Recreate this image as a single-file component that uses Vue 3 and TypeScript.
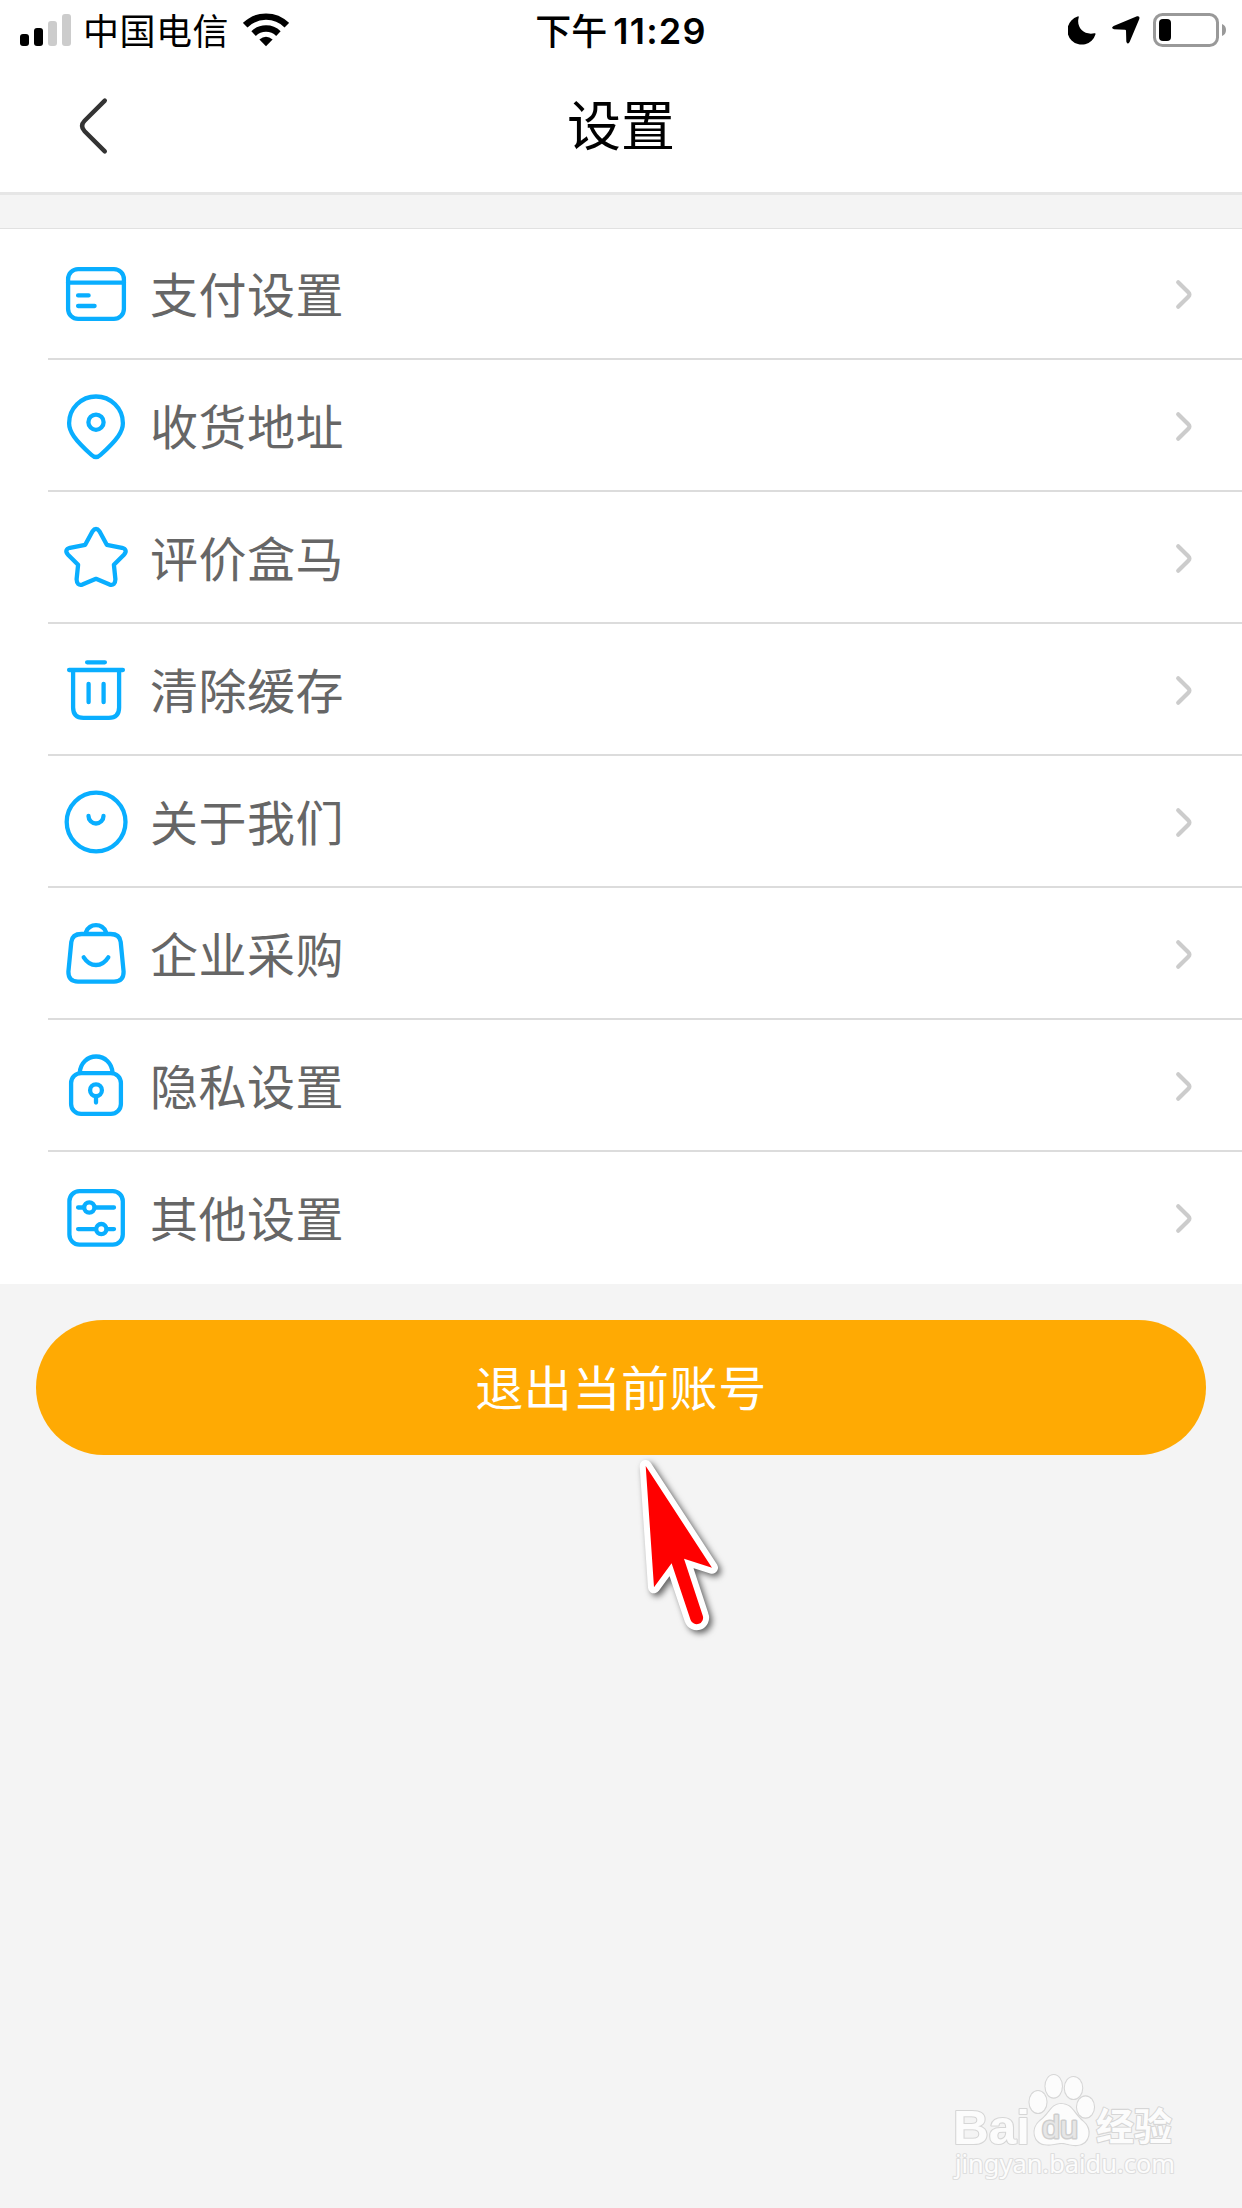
<script setup lang="ts">
interface SettingItem {
  label: string
  icon: string
}

const items: SettingItem[] = [
  { label: '支付设置', icon: 'card' },
  { label: '收货地址', icon: 'pin' },
  { label: '评价盒马', icon: 'star' },
  { label: '清除缓存', icon: 'trash' },
  { label: '关于我们', icon: 'about' },
  { label: '企业采购', icon: 'bag' },
  { label: '隐私设置', icon: 'lock' },
  { label: '其他设置', icon: 'sliders' },
]
</script>

<template>
  <div class="screen">
    <header class="top">
      <div class="status">
        <div class="status-left">
          <svg class="signal" width="52" height="34" viewBox="0 0 52 34">
            <rect x="0" y="21" width="9" height="12" rx="3" />
            <rect x="14" y="15" width="9" height="18" rx="3" />
            <rect x="28" y="8" width="9" height="25" rx="3" fill="#ccc" />
            <rect x="42" y="1" width="9" height="32" rx="3" fill="#ccc" />
          </svg>
          <span class="carrier">中国电信</span>
          <svg class="wifi" width="46" height="34" viewBox="0 0 46 34">
            <g fill="none" stroke="#000" stroke-width="6.4">
              <path d="M2.2 12.2A29.5 29.5 0 0 1 43.8 12.2" />
              <path d="M10.6 20.6A17.8 17.8 0 0 1 35.4 20.6" />
            </g>
            <path d="M23 33.2L16.4 26.6Q23 20.8 29.6 26.6Z" />
          </svg>
        </div>
        <div class="time"><span class="ampm">下午</span><span class="clock">11:29</span></div>
        <div class="status-right">
          <svg width="28" height="30" viewBox="0 0 28 30">
            <path d="M9.6 1.6Q11 .7 10.7 2.4C8 12 15.5 20.6 26.4 18.3Q28 18 27.4 19.4A14.3 14.3 0 1 1 9.6 1.6Z" />
          </svg>
          <svg class="location" width="28" height="30" viewBox="0 0 28 30">
            <path d="M25 1.3Q28.2.6 27.3 4L17.6 27Q15.4 30.2 14.3 26.6L14 15.4Q13.8 14.7 13 14.7L2 14.2Q-1.6 13 1.6 10.9Z" />
          </svg>
          <svg class="battery" width="74" height="36" viewBox="0 0 74 36">
            <rect x="1.5" y="2.5" width="63" height="31" rx="8" fill="none" stroke="#999" stroke-width="3" />
            <rect x="6" y="7" width="12" height="22" rx="4" />
            <path d="M69 12Q73 13.5 73 18T69 24Z" fill="#999" />
          </svg>
        </div>
      </div>
      <div class="nav">
        <svg class="back" width="40" height="68" viewBox="0 0 40 68">
          <path d="M32.8 8.6L12.6 28.8Q7.6 34 12.6 39.2L32.8 59.4" />
        </svg>
        <h1>设置</h1>
      </div>
    </header>

    <ul class="list">
      <li v-for="item in items" :key="item.icon">
        <svg class="icon" width="72" height="72" viewBox="0 0 72 72">
          <template v-if="item.icon === 'card'">
            <rect x="8.1" y="11.1" width="55.8" height="49.8" rx="10" />
            <path d="M8 24.7H64M18.1 37.4H28.6M18.1 48H34.6" />
          </template>
          <template v-else-if="item.icon === 'pin'">
            <path d="M9.1 33.2A26.9 26.7 0 0 1 62.9 33.2C62.9 41.5 57.5 49.5 40.4 65Q36 69.2 31.6 65C14.5 49.5 9.1 41.5 9.1 33.2Z" />
            <circle cx="36" cy="32.2" r="7.6" />
          </template>
          <path
            v-else-if="item.icon === 'star'"
            d="M25.2 22.8L32.4 9.4Q36 4.3 39.6 9.4L46.8 22.8L62 25.8Q68 27.6 64.2 32.4L53.9 42.8L55.4 57.3Q55.2 64 49.6 62.6L36 56.8L22.4 62.6Q16.8 64 16.6 57.3L18.1 42.8L7.8 32.4Q4 27.6 10 25.8Z"
          />
          <path
            v-else-if="item.icon === 'trash'"
            d="M27.1 8.3H44.9M9.1 16H62.9M13.1 16V53.5Q13.1 63.8 23.4 63.8H48.8Q59.1 63.8 59.1 53.5V16M28.6 29.8V48.2M43.6 29.8V48.2"
          />
          <template v-else-if="item.icon === 'about'">
            <circle cx="36.1" cy="36" r="29.4" />
            <path d="M28.5 30A7.5 7.5 0 0 0 43.5 30" />
          </template>
          <path
            v-else-if="item.icon === 'bag'"
            d="M26 14Q29 7.2 36 7.2T46 14M21.5 16H50.5Q59.8 16 60.7 24L63.6 53.6Q63.8 63.6 54 63.6H18Q8.2 63.6 8.4 53.6L11.3 24Q12.2 16 21.5 16ZM23.7 39.3Q28.6 47 36 47T48.3 39.3"
          />
          <template v-else-if="item.icon === 'lock'">
            <rect x="11.1" y="23.1" width="49.8" height="40.8" rx="10" />
            <path d="M19.8 22.6C20.4 13 27.4 6.5 36.1 6.5S51.9 13 52.5 22.6M36 47V52.6" />
            <circle cx="36" cy="40.3" r="5.9" />
          </template>
          <template v-else>
            <rect x="9.4" y="9.2" width="53.4" height="53.4" rx="10" />
            <path d="M18.1 25.5H22.5M36 25.5H54M18.1 47.1H34.5M48 47.1H54" />
            <circle cx="29.3" cy="25.5" r="5.1" />
            <circle cx="41.3" cy="47.1" r="5.1" />
          </template>
        </svg>
        <span class="label">{{ item.label }}</span>
        <svg class="chevron" width="24" height="36" viewBox="0 0 24 36">
          <path d="M6.2 6.2L16.3 16.2Q18.6 18.5 16.3 20.8L6.2 30.8" />
        </svg>
      </li>
    </ul>

    <button class="logout" type="button">退出当前账号</button>

    <svg class="pointer" width="110" height="200" viewBox="0 0 110 200">
      <path
        d="M15.7 16L82 117.7L54 108.7L72.7 165.5A6.4 6.4 0 0 1 60.6 170L41.6 113.3L24 137.3Z"
        fill="#fff"
        stroke="#fff"
        stroke-width="12"
        stroke-linejoin="round"
      />
      <path
        d="M15.7 16L82 117.7L54 108.7L72.7 165.5A6.4 6.4 0 0 1 60.6 170L41.6 113.3L24 137.3Z"
        fill="#f00"
      />
    </svg>

    <svg class="watermark" width="270" height="150" viewBox="0 0 270 150">
      <g class="mark">
        <text x="23" y="93.5" font-size="49" font-weight="700" textLength="77" lengthAdjust="spacingAndGlyphs">Bai</text>
        <ellipse cx="108" cy="52" rx="8.5" ry="11" />
        <ellipse cx="123.7" cy="36.3" rx="8.2" ry="11.3" />
        <ellipse cx="143.5" cy="38" rx="8.7" ry="11" />
        <ellipse cx="155.5" cy="57" rx="8.5" ry="10.6" />
        <path d="M131 54C121 54 120 64 110 71C101 78 103 94 117 94.5C124 95 126 93 131.5 93S140 95.5 147 95C160 94 162 79 153 71.5C143 63 142 54 131 54Z" />
        <text class="du" x="112" y="88" font-size="31" textLength="36" lengthAdjust="spacingAndGlyphs">du</text>
        <text class="cjk" x="166" y="90" font-size="38" font-weight="700" textLength="76" lengthAdjust="spacingAndGlyphs">经验</text>
        <text class="url" x="25" y="123" font-size="26" textLength="220" lengthAdjust="spacingAndGlyphs">jingyan.baidu.com</text>
      </g>
    </svg>
  </div>
</template>

<style>
body {
  margin: 0;
  background: #f4f4f4;
}
</style>

<style scoped>
.screen {
  position: relative;
  width: 1242px;
  height: 2208px;
  overflow: hidden;
  background: #f4f4f4;
  font-family: 'Noto Sans CJK SC', sans-serif;
}
.top {
  box-sizing: border-box;
  height: 195px;
  background: #fff;
  border-bottom: 3px solid #e6e6e6;
}
.status {
  display: grid;
  grid-template-columns: 1fr auto 1fr;
  height: 60px;
  align-items: center;
}
.status-left,
.status-right {
  display: flex;
  align-items: center;
}
.status-left {
  padding-left: 20px;
}
.status-right {
  justify-content: flex-end;
  padding-right: 15px;
}
.location {
  margin-left: 16px;
}
.battery {
  margin-left: 13px;
}
.carrier {
  margin-left: 11px;
  width: 146px;
  padding-bottom: 2px;
  font-size: 36px;
  line-height: 58px;
  letter-spacing: 0.5px;
}
.wifi {
  margin-left: 14px;
}
.time {
  display: flex;
  align-items: center;
  font-size: 36px;
  line-height: 58px;
}
.ampm {
  padding-bottom: 2px;
  font-weight: 500;
}
.clock {
  margin-left: 6px;
  padding-top: 1px;
  font-family: Inter, sans-serif;
  font-weight: 600;
  letter-spacing: 1.2px;
}
.nav {
  display: grid;
  grid-template-columns: 1fr auto 1fr;
  align-items: center;
  height: 132px;
}
.back {
  margin-left: 72px;
  fill: none;
  stroke: #333;
  stroke-width: 4.4;
  stroke-linecap: round;
}
h1 {
  margin: 0;
  padding-bottom: 6px;
  font-size: 54px;
  font-weight: 400;
  line-height: 126px;
}
.list {
  margin: 33px 0 0;
  padding: 0;
  list-style: none;
  background: #fff;
  box-shadow: inset 0 1px #e1e1e1;
}
li {
  display: flex;
  align-items: center;
  box-sizing: border-box;
  height: 132px;
  margin-left: 48px;
  padding: 2px 46px 0 12px;
  border-bottom: 2px solid #dcdcdc;
}
li:last-child {
  border-bottom-color: #fff;
}
.icon {
  fill: none;
  stroke: #09aeff;
  stroke-width: 4.3;
  stroke-linecap: round;
  stroke-linejoin: round;
}
.label {
  flex: 1;
  margin-left: 18px;
  padding-bottom: 4px;
  color: #666;
  font-size: 48px;
  line-height: 124px;
  letter-spacing: 0.5px;
}
.chevron {
  fill: none;
  stroke: #ccc;
  stroke-width: 4.2;
  stroke-linecap: round;
}
.logout {
  display: block;
  box-sizing: border-box;
  width: 1170px;
  height: 135px;
  margin: 36px auto 0;
  padding: 0 0 4px;
  border: 0;
  border-radius: 68px;
  background: #ffaa03;
  color: #fff;
  font: 400 48px / 131px 'Noto Sans CJK SC', sans-serif;
  letter-spacing: 0.6px;
}
.pointer {
  position: absolute;
  left: 630px;
  top: 1450px;
  overflow: visible;
  filter: drop-shadow(3px 3px 3px rgba(0, 0, 0, 0.6));
}
.watermark {
  position: absolute;
  left: 930px;
  top: 2050px;
}
.mark {
  fill: #fcfcfc;
  stroke: #d6d6d6;
  stroke-width: 2.2px;
  stroke-linejoin: round;
  paint-order: stroke;
  font-family: 'Liberation Sans', sans-serif;
}
.du {
  fill: #e6e6e6;
  stroke: #cecece;
  stroke-width: 3px;
}
.cjk {
  font-family: 'Noto Sans CJK SC', sans-serif;
}
.url {
  font-family: 'Noto Sans', sans-serif;
  stroke: #dedede;
}
</style>
